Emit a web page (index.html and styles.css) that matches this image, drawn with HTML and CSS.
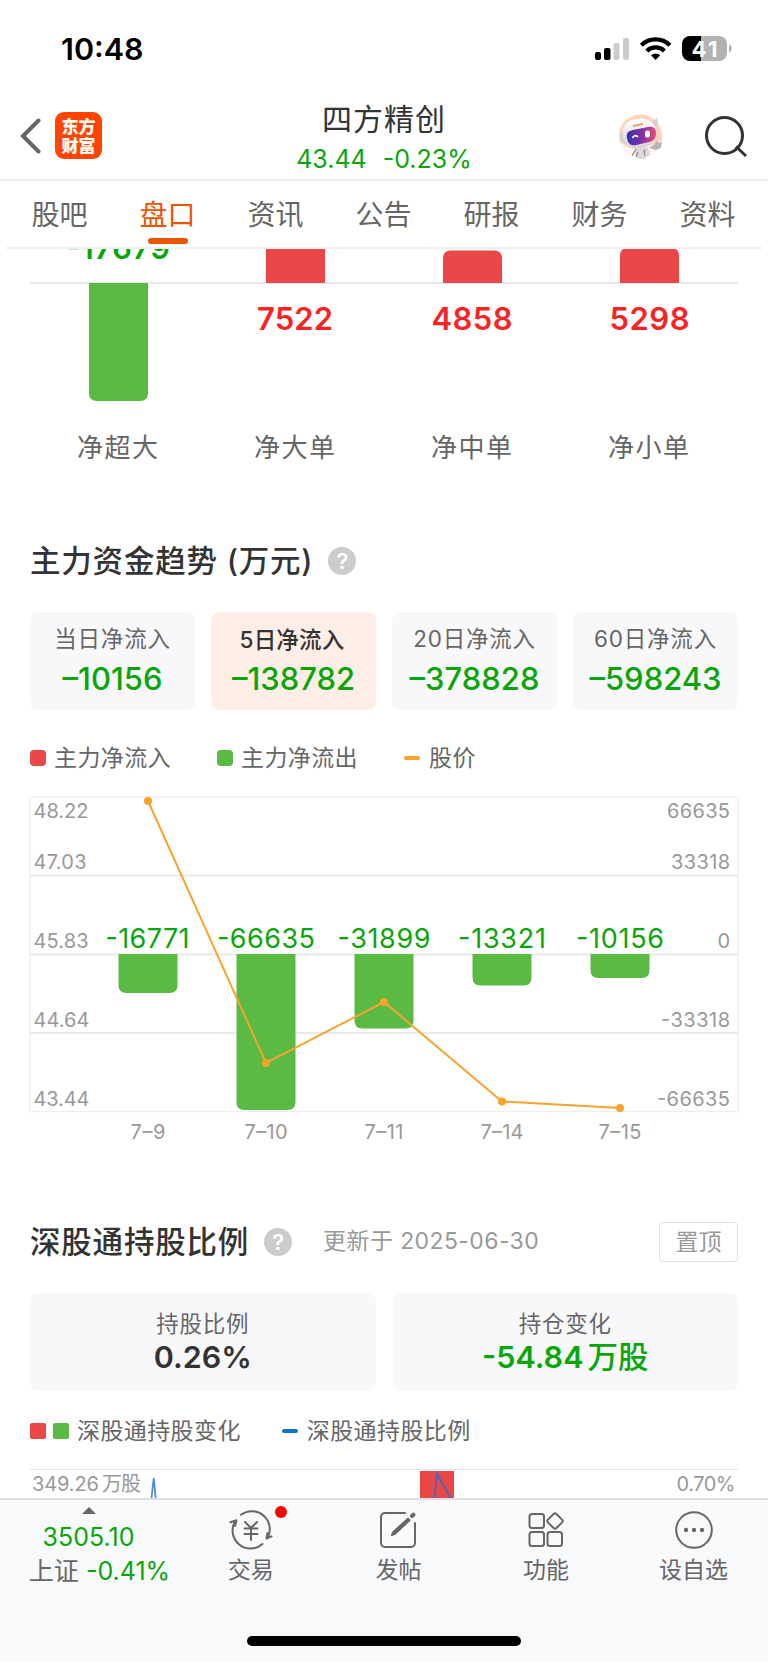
FILE: index.html
```html
<!DOCTYPE html>
<html lang="zh-CN">

<head>
    <meta charset="utf-8">
    <title>四方精创</title>
    <link rel="stylesheet" href="styles.css">
</head>

<body>
    <div class="status-bar">
        <span class="clock">10:48</span>
        <svg class="status-icons" width="138" height="28" viewBox="594 34 138 28">
            <rect x="595" y="52" width="6" height="8" rx="2" />
            <rect x="604" y="48" width="6.5" height="12" rx="2" />
            <rect x="613.500" y="43" width="6" height="17" rx="2" fill="#ccc" />
            <rect x="623" y="38" width="6" height="22" rx="2" fill="#ccc" />
            <g fill="none" stroke="#000" stroke-width="4.200">
                <path d="M641.300 45.200a20.500 20.500 0 0 1 28.600 0" />
                <path d="M646.800 51a12.700 12.700 0 0 1 17.600 0" />
            </g>
            <path d="M655.600 60l-4.600-4.700a6.600 6.600 0 0 1 9.200 0z" />
            <path d="M690 36h11v25h-11a8 8 0 0 1-8-8v-9a8 8 0 0 1 8-8z" />
            <path d="M701 36h18a8 8 0 0 1 8 8v9a8 8 0 0 1-8 8h-18z" fill="#b2b2b2" />
            <path d="M729 44.500c3.700 1.500 3.700 6.500 0 8z" fill="#b2b2b2" />
            <text x="704.500" y="56.700" text-anchor="middle" class="battery-text" textLength="26">41</text>
        </svg>
    </div>

    <header class="header">
        <svg class="back" width="22" height="36" viewBox="0 0 22 36">
            <path d="M18.500 2.500L3 18l15.500 15.500" />
        </svg>
        <div class="app-logo"><span>东方</span><span>财富</span></div>
        <div class="stock">
            <div class="stock-name">四方精创</div>
            <div class="stock-price"><span>43.44</span><span>-0.23%</span></div>
        </div>
        <svg class="robot" width="46" height="48" viewBox="0 0 46 48">
            <defs>
                <linearGradient id="face" x1="0" y1="0" x2="1" y2="0">
                    <stop offset="0" stop-color="#3a2fae" />
                    <stop offset=".5" stop-color="#7d2fa8" />
                    <stop offset="1" stop-color="#e2507c" />
                </linearGradient>
                <linearGradient id="shell" x1="0" y1="0" x2="0" y2="1">
                    <stop offset="0" stop-color="#fff" />
                    <stop offset="1" stop-color="#d5d0d2" />
                </linearGradient>
            </defs>
            <circle cx="22.500" cy="23" r="21.500" fill="#fdd3ba" />
            <path d="M2 29q10 8 18 7l14-4 9-3q-3 15-20 16Q7 44 2 29z" fill="#fff4ef" />
            <path d="M3 17l-1 11 6 3 3-9zM35 8q3-1 3-4 4 6 0 11z" fill="#d3cfd3" />
            <path d="M5 24C3 12 11 6 19 6c9-2 17 2 19 11 2 8-2 14-11 17-11 3-20 0-22-10z" fill="url(#shell)" />
            <path d="M9 25c-1-5 1-7 6-8l15-3c5-1 8 1 8 6s-2 8-7 9l-13 3c-6 1-8-2-9-7z" fill="url(#face)" />
            <path d="M14.500 25q2-4 5.500-1" stroke="#fff" stroke-width="1.700" fill="none" />
            <rect x="27" y="17.500" width="5" height="7" rx="2" fill="#fff" />
            <path d="M15 12l10-2v2l-10 2z" fill="#e9a565" />
            <path d="M18 35l12-1 2 8-6 4h-6l-3-4z" fill="#ddd9da" />
            <path d="M31 35l6-4 1-3 3 2 3-1-1 6-5 2z" fill="#b9b4b8" />
            <path d="M18 36l-4 7m6-4l-2 5m8-6l1 5" stroke="#8c878c" stroke-width="1.200" />
            <path d="M25 37l3-.500v1.500l-3 .500z" fill="#e59a5b" />
        </svg>
        <svg class="search" width="44" height="44" viewBox="0 0 44 44">
            <circle cx="20.500" cy="20.500" r="18" />
            <path d="M32 31.500l10 9.500" />
        </svg>
    </header>

    <nav class="tabs">
        <div class="tab">股吧</div>
        <div class="tab active">盘口</div>
        <div class="tab">资讯</div>
        <div class="tab">公告</div>
        <div class="tab">研报</div>
        <div class="tab">财务</div>
        <div class="tab">资料</div>
    </nav>

    <!-- order flow: positive bars grow up from the axis, negative ones down -->
    <svg class="chart" width="768" height="231" viewBox="0 249 768 231">
        <path d="M30 283h708" stroke="#dedfe3" stroke-width="1.500" />
        <text x="118" y="258.500" class="flow-value down" textLength="104">-17679</text>
        <path d="M89 283h59v110q0 8-8 8h-43q-8 0-8-8z" class="bar-down" />
        <path d="M266 248h59v35h-59z" class="bar-up" />
        <path d="M443 283v-24.500q0-8 8-8h43q8 0 8 8v24.500z" class="bar-up" />
        <path d="M620 283v-27q0-8 8-8h43q8 0 8 8v27z" class="bar-up" />
        <text x="295" y="329.500" class="flow-value up" textLength="76">7522</text>
        <text x="472" y="329.500" class="flow-value up" textLength="81">4858</text>
        <text x="649.500" y="329.500" class="flow-value up" textLength="80">5298</text>
        <text x="117.500" y="456.500" class="flow-label" textLength="81">净超大</text>
        <text x="294.500" y="456.500" class="flow-label" textLength="81">净大单</text>
        <text x="471.500" y="456.500" class="flow-label" textLength="81">净中单</text>
        <text x="648.500" y="456.500" class="flow-label" textLength="81">净小单</text>
    </svg>

    <section class="section">
        <div class="section-head">
            <h2>主力资金趋势 (万元)</h2>
            <span class="help">?</span>
        </div>
        <div class="cards four">
            <div class="card">
                <div class="card-label">当日净流入</div>
                <div class="card-value">–10156</div>
            </div>
            <div class="card selected">
                <div class="card-label">5日净流入</div>
                <div class="card-value">–138782</div>
            </div>
            <div class="card">
                <div class="card-label">20日净流入</div>
                <div class="card-value">–378828</div>
            </div>
            <div class="card">
                <div class="card-label">60日净流入</div>
                <div class="card-value">–598243</div>
            </div>
        </div>
        <div class="legend trend">
            <span class="legend-item"><i class="dot red"></i>主力净流入</span>
            <span class="legend-item"><i class="dot green"></i>主力净流出</span>
            <span class="legend-item"><i class="dash orange"></i>股价</span>
        </div>
    </section>

    <svg class="chart" width="768" height="387" viewBox="0 773 768 387">
        <path d="M30 797h708v314.500H30z" fill="none" stroke="#efefef" stroke-width="1.500" />
        <path d="M30 875.500h708M30 954.500h708M30 1033h708" stroke="#e9e9eb" stroke-width="2" />

        <g class="bar-down">
            <path d="M118.500 954h59v31q0 8-8 8h-43q-8 0-8-8z" />
            <path d="M236.500 954h59v148q0 8-8 8h-43q-8 0-8-8z" />
            <path d="M354.500 954h59v66.500q0 8-8 8h-43q-8 0-8-8z" />
            <path d="M472.500 954h59v23.500q0 8-8 8h-43q-8 0-8-8z" />
            <path d="M590.500 954h59v16q0 8-8 8h-43q-8 0-8-8z" />
        </g>

        <g class="axis">
            <text x="33.500" y="818" textLength="55">48.22</text>
            <text x="33.500" y="869" textLength="53">47.03</text>
            <text x="33.500" y="948" textLength="55">45.83</text>
            <text x="33.500" y="1026.500" textLength="56">44.64</text>
            <text x="33.500" y="1105.500" textLength="56">43.44</text>
        </g>
        <g class="axis right">
            <text x="730" y="818" textLength="63">66635</text>
            <text x="730" y="869" textLength="59">33318</text>
            <text x="730" y="948">0</text>
            <text x="730" y="1026.500" textLength="69">-33318</text>
            <text x="730" y="1105.500" textLength="73">-66635</text>
        </g>
        <g class="bar-value">
            <text x="147.500" y="948" textLength="84">-16771</text>
            <text x="266" y="948" textLength="98">-66635</text>
            <text x="384" y="948" textLength="93">-31899</text>
            <text x="502" y="948" textLength="88">-13321</text>
            <text x="620" y="948" textLength="88">-10156</text>
        </g>
        <g class="dates">
            <text x="148" y="1139" textLength="35">7–9</text>
            <text x="266" y="1139" textLength="43">7–10</text>
            <text x="384" y="1139" textLength="39">7–11</text>
            <text x="502" y="1139" textLength="43">7–14</text>
            <text x="620" y="1139" textLength="43">7–15</text>
        </g>

        <path d="M148 801L266 1063L384 1002L502 1101.500L620 1108" fill="none" stroke="#f9a32c" stroke-width="2" />
        <g fill="#f9a32c">
            <circle cx="148" cy="801" r="4" />
            <circle cx="266" cy="1063" r="4" />
            <circle cx="384" cy="1002" r="4" />
            <circle cx="502" cy="1101.500" r="4" />
            <circle cx="620" cy="1108" r="4" />
        </g>
    </svg>

    <section class="section holding-section">
        <div class="section-head">
            <h2>深股通持股比例</h2>
            <span class="help">?</span>
            <span class="updated">更新于 2025-06-30</span>
            <button class="pin">置顶</button>
        </div>
        <div class="cards two">
            <div class="card">
                <div class="card-label">持股比例</div>
                <div class="card-value dark">0.26%</div>
            </div>
            <div class="card">
                <div class="card-label">持仓变化</div>
                <div class="card-value">-54.84<span class="unit">万股</span></div>
            </div>
        </div>
        <div class="legend holding">
            <span class="legend-item"><i class="dot red"></i><i class="dot green"></i>深股通持股变化</span>
            <span class="legend-item"><i class="dash blue"></i>深股通持股比例</span>
        </div>
    </section>

    <svg class="chart" width="768" height="52" viewBox="0 1446 768 52">
        <path d="M30 1469.500h708" stroke="#e6e6e6" stroke-width="1.200" />
        <g class="axis">
            <text x="32" y="1490.500" textLength="67">349.26</text>
            <text x="102" y="1491" textLength="39">万股</text>
        </g>
        <text x="735.500" y="1490.500" class="axis right" textLength="59">0.70%</text>
        <path d="M151.500 1498l2.200-20 2 20" fill="none" stroke="#4a90e2" stroke-width="1.800" />
        <path d="M420 1471h34v27h-34z" class="bar-up" />
        <path d="M434.500 1498l2.500-24.500 13.500 24.500" fill="none" stroke="#4668b8" stroke-width="1.800" />
    </svg>

    <footer class="bottom-bar">
        <div class="bottom-nav">
            <div class="index">
                <i class="arrow"></i>
                <div class="index-value">3505.10</div>
                <div class="index-change">上证 <span>-0.41%</span></div>
            </div>
            <div class="nav-item">
                <svg width="44" height="44" viewBox="0 0 44 44">
                    <path d="M12 6.800A18 18 0 0 1 38.500 30M33.500 36A18 18 0 0 1 6 13.500" />
                    <path d="M1.500 14.300L7.500 12.200 6 18M42.500 28.300L37.500 30.500 38.500 25" />
                    <path d="M16 14l6 6 6-6M22 20v12M15.500 20.500h13M15.500 26h13" />
                </svg>
                <i class="badge"></i>
                <span>交易</span>
            </div>
            <div class="nav-item">
                <svg width="44" height="44" viewBox="0 0 44 44">
                    <path d="M29 5H9a4 4 0 0 0-4 4v26a4 4 0 0 0 4 4h26a4 4 0 0 0 4-4V15" />
                    <path d="M16 27.200l1.300-3.200L32 10.700l1.500 1.500L19.300 25.500z" fill="#666" />
                    <path d="M36 8l1.500-1.300" stroke-width="4" />
                </svg>
                <span>发帖</span>
            </div>
            <div class="nav-item">
                <svg width="44" height="44" viewBox="0 0 44 44">
                    <rect x="5.500" y="6" width="14.500" height="14" rx="2.500" />
                    <rect x="5.500" y="24" width="14.500" height="14" rx="2.500" />
                    <rect x="23.500" y="24" width="14.500" height="14" rx="2.500" />
                    <rect x="25" y="7" width="12" height="12" rx="2" transform="rotate(45 31 13)" />
                </svg>
                <span>功能</span>
            </div>
            <div class="nav-item">
                <svg width="44" height="44" viewBox="0 0 44 44">
                    <circle cx="22" cy="22" r="17.800" />
                    <g fill="#666" stroke="none">
                        <circle cx="14" cy="22" r="2.200" />
                        <circle cx="22" cy="22" r="2.200" />
                        <circle cx="30" cy="22" r="2.200" />
                    </g>
                </svg>
                <span>设自选</span>
            </div>
        </div>
        <div class="home-indicator"></div>
    </footer>
</body>

</html>
```
FILE: styles.css
```css
* {
    box-sizing: border-box;
}

body {
    margin: 0;
    width: 768px;
    height: 1663px;
    overflow: hidden;
    background-color: #fff;
    color: #666;
    font-family: Inter, "Noto Sans CJK SC", sans-serif;
}

h2 {
    margin: 0;
    font-size: 30.5px;
    font-weight: 500;
    letter-spacing: .8px;
    line-height: 40px;
    color: #333;
    white-space: pre;
}

.status-bar {
    display: flex;
    justify-content: space-between;
    height: 98px;
    padding: 34px 36px 0 61px;
}

.clock {
    font-size: 30.5px;
    font-weight: 600;
    line-height: 30px;
    color: #000;
}

.battery-text {
    font-size: 22px;
    font-weight: 700;
    fill: #fff;
}

.header {
    display: flex;
    align-items: center;
    height: 83px;
    padding: 0 20px 0 20px;
    border-bottom: 2px solid #ececee;
}

.header svg {
    fill: none;
}

.back path {
    stroke: #666;
    stroke-width: 4;
    stroke-linecap: round;
}

.back {
    margin-top: -5px;
}

.app-logo {
    display: flex;
    flex-direction: column;
    align-items: center;
    justify-content: center;
    width: 47px;
    height: 47px;
    margin: -7px 0 0 13px;
    border-radius: 9px;
    background-color: #ff4400;
    color: #fff;
    font-family: "Noto Sans CJK SC", sans-serif;
    font-size: 17px;
    font-weight: 900;
    line-height: 19px;
}

.stock {
    flex: 1;
    padding-left: 48px;
    text-align: center;
}

.stock-name {
    font-size: 30px;
    letter-spacing: 1px;
    line-height: 42px;
    color: #333;
}

.stock-price {
    display: flex;
    justify-content: center;
    gap: 16px;
    font-size: 25px;
    line-height: 39px;
    color: #0aa50a;
}

.robot {
    margin: -3px 40px 0 0;
}

.search {
    margin-top: -4px;
    stroke: #333;
    stroke-width: 3;
}

.tabs {
    display: flex;
    height: 68px;
    margin: 0 6px;
    border-bottom: 2px solid #efeff1;
}

.tab {
    position: relative;
    flex: 1;
    padding-right: 1px;
    text-align: center;
    font-size: 28px;
    line-height: 69px;
}

.tab.active {
    color: #ea5504;
}

.tab.active::after {
    content: "";
    position: absolute;
    left: 34px;
    bottom: 3px;
    width: 40px;
    height: 6px;
    border-radius: 3px;
    background-color: #ea5504;
}

.chart {
    display: block;
}

.bar-up {
    fill: #ea4848;
}

.bar-down {
    fill: #5aba43;
}

.flow-value {
    font-size: 31px;
    font-weight: 600;
    text-anchor: middle;
}

.up {
    fill: #fa2222;
}

.down {
    fill: #0aa50a;
}

.flow-label {
    font-size: 26px;
    text-anchor: middle;
    fill: #666;
}

.axis {
    font-size: 20px;
    fill: #999;
}

.right {
    text-anchor: end;
}

.bar-value {
    font-size: 27px;
    text-anchor: middle;
    fill: #0aa50a;
}

.dates {
    font-size: 20px;
    text-anchor: middle;
    fill: #999;
}

.section {
    padding: 61px 30px 0;
}

.holding-section {
    padding-top: 62px;
}

.section-head {
    display: flex;
    align-items: center;
    height: 40px;
}

.help {
    width: 28px;
    height: 28px;
    margin-left: 15px;
    border-radius: 50%;
    background-color: #ccc;
    color: #fff;
    font-size: 22px;
    font-weight: 600;
    line-height: 28px;
    text-align: center;
}

.updated {
    margin-left: 31px;
    font-size: 23px;
    letter-spacing: .4px;
    line-height: 38px;
    margin-top: -2px;
    color: #999;
}

.pin {
    width: 79px;
    height: 40px;
    margin-left: auto;
    padding: 0;
    border: 1px solid #dcdee8;
    border-radius: 4px;
    background-color: #fff;
    font-family: inherit;
    font-size: 23px;
    line-height: 37px;
    color: #999;
}

.cards {
    display: grid;
    margin-top: 31px;
}

.cards.four {
    grid-template-columns: repeat(4, 1fr);
    gap: 16px;
}

.cards.two {
    grid-template-columns: repeat(2, 1fr);
    gap: 17px;
}

.card {
    height: 98px;
    padding-top: 10px;
    border-radius: 8px;
    background-color: #f8f8fb;
    text-align: center;
}

.card.selected {
    background-color: #ffeee6;
}

.card-label {
    font-size: 22.5px;
    line-height: 34px;
    letter-spacing: .8px;
}

.selected .card-label {
    font-weight: 500;
    letter-spacing: .2px;
    padding-right: 3px;
    line-height: 36px;
    margin-bottom: -2px;
    color: #333;
}

.card-value {
    font-size: 31px;
    font-weight: 500;
    line-height: 46px;
    color: #0aa50a;
}

.two .card {
    padding-top: 14px;
}

.two .card-value {
    font-size: 30.5px;
    font-weight: 600;
    line-height: 32px;
}

.two .card-value.dark {
    color: #333;
}

.unit {
    margin-left: 4px;
    font-weight: 500;
}

.legend {
    display: flex;
    height: 30px;
    font-size: 23px;
    letter-spacing: .4px;
    line-height: 30px;
}

.legend.trend {
    gap: 46px;
    margin-top: 33px;
}

.legend.holding {
    gap: 41px;
    margin-top: 25px;
}

.legend-item {
    display: flex;
    align-items: center;
}

.dot {
    width: 16px;
    height: 16px;
    margin-right: 8px;
    border-radius: 4px;
}

.holding .dot {
    border-radius: 2px;
}

.dot + .dot {
    margin-left: -1px;
}

.dash {
    width: 16px;
    height: 4px;
    margin-right: 9px;
    border-radius: 2px;
}

.red {
    background-color: #ea4848;
}

.green {
    background-color: #5aba43;
}

.orange {
    background-color: #f9a32c;
}

.blue {
    background-color: #0d6fdc;
}

.bottom-bar {
    height: 164px;
    border-top: 2px solid #dddfe3;
    background-color: #f8f9fb;
}

.bottom-nav {
    display: grid;
    grid-template-columns: 177px repeat(4, 147.6px);
    height: 136px;
}

.index {
    text-align: center;
}

.arrow {
    display: block;
    width: 0;
    margin: 7px auto 0;
    border: 7px solid transparent;
    border-top: 0;
    border-bottom-color: #666;
}

.index-value {
    margin-top: 8px;
    font-size: 25px;
    line-height: 30px;
    color: #0aa50a;
}

.index-change {
    padding-left: 22px;
    font-size: 25px;
    line-height: 38px;
    white-space: nowrap;
}

.index-change span {
    color: #0aa50a;
}

.nav-item {
    position: relative;
    display: flex;
    flex-direction: column;
    align-items: center;
    padding-top: 8px;
    font-size: 23px;
    line-height: 36px;
}

.nav-item svg {
    fill: none;
    stroke: #666;
    stroke-width: 2;
    stroke-linecap: round;
    stroke-linejoin: round;
}

.badge {
    position: absolute;
    top: 6px;
    left: 98px;
    width: 12px;
    height: 12px;
    border-radius: 50%;
    background-color: #ff0000;
}

.home-indicator {
    width: 274px;
    height: 10px;
    margin: 0 auto;
    border-radius: 5px;
    background-color: #000;
}
```
